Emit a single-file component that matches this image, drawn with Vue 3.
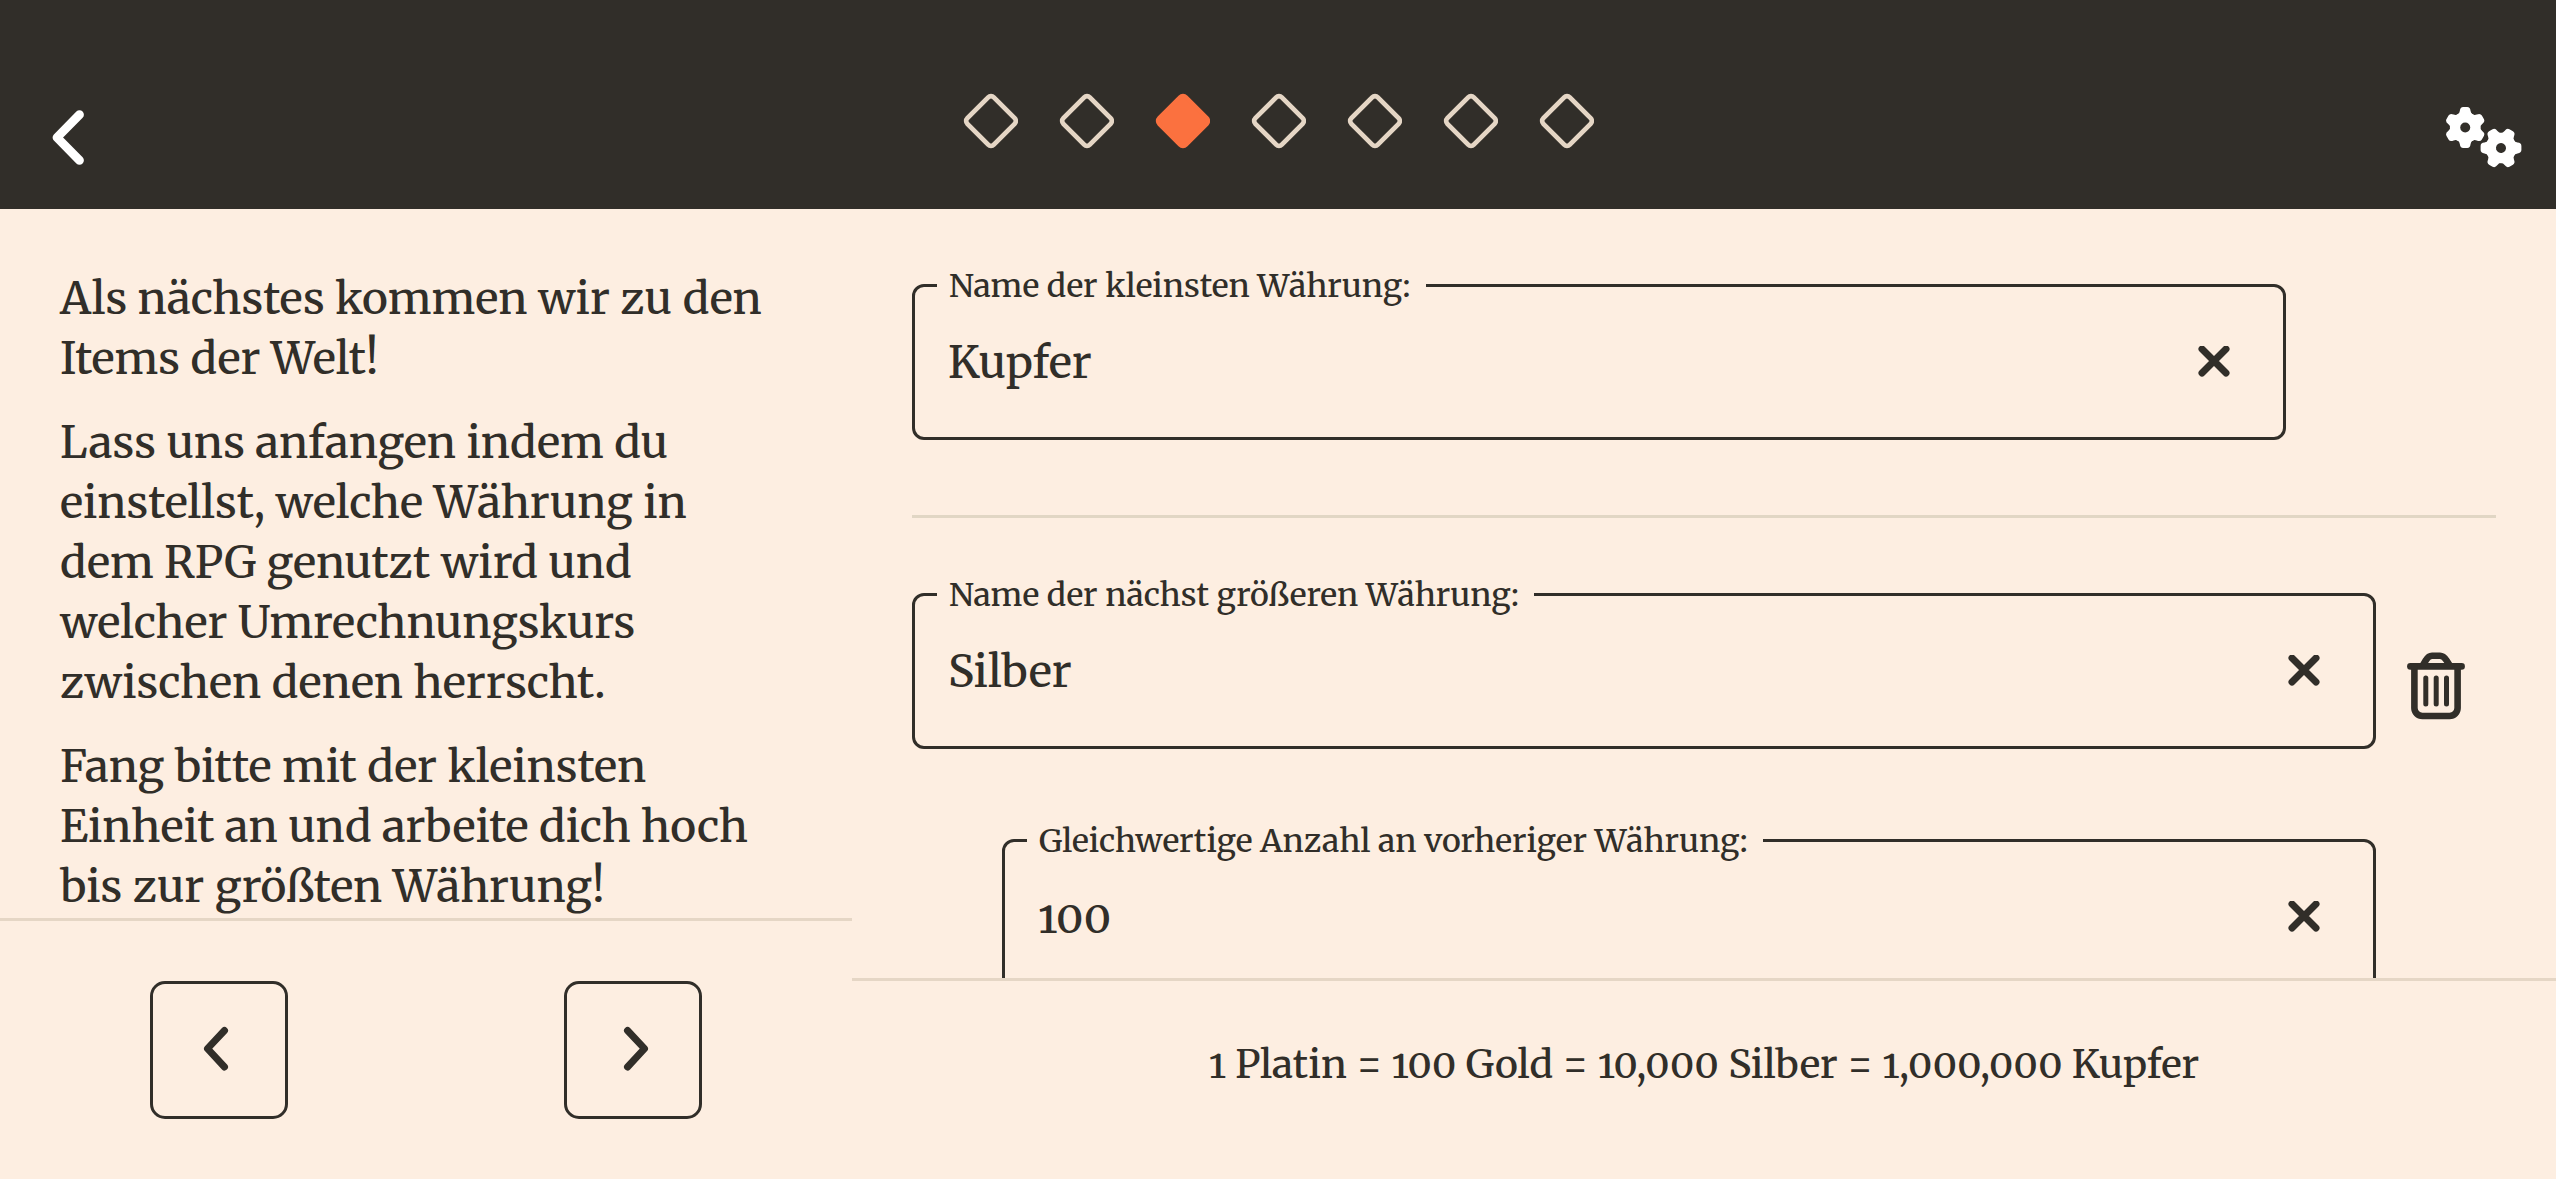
<script setup>
import { ref } from 'vue'

const steps = 7
const currentStep = 3

const smallest = ref('Kupfer')
const next = ref('Silber')
const rate = ref('100')

const teeth = [0, 60, 120, 180, 240, 300]
</script>

<template>
  <div class="app">
    <header class="topbar">
      <button class="back" type="button" aria-label="Zurück">
        <svg width="32" height="56" viewBox="0 0 32 56" aria-hidden="true">
          <path d="M27.5 4.7 L5 27.5 L27.5 50.3" fill="none" stroke="currentColor" stroke-width="8.8" stroke-linecap="round" stroke-linejoin="round" />
        </svg>
      </button>

      <ol class="steps">
        <li v-for="n in steps" :key="n" :class="['step', { active: n === currentStep }]">
          <svg width="56" height="56" viewBox="-29 -28 56 56" aria-hidden="true">
            <rect x="-18.7" y="-18.7" width="37.4" height="37.4" rx="4" transform="rotate(45)" />
          </svg>
        </li>
      </ol>

      <button class="settings" type="button" aria-label="Einstellungen">
        <svg width="76" height="62" viewBox="0 0 76 62" aria-hidden="true">
          <defs>
            <mask id="gear-hole">
              <rect x="-24" y="-24" width="48" height="48" fill="#fff" />
              <circle r="5" fill="#000" />
            </mask>
            <g id="gear" mask="url(#gear-hole)">
              <circle r="15.3" />
              <path
                v-for="angle in teeth"
                :key="angle"
                :transform="`rotate(${angle})`"
                d="M-8 -12.5 Q-5.6 -14 -5.4 -16.5 Q-5 -20.4 -2 -20.4 H2 Q5 -20.4 5.4 -16.5 Q5.6 -14 8 -12.5 Z"
              />
            </g>
          </defs>
          <use href="#gear" transform="translate(19.2 20.5)" />
          <use href="#gear" transform="translate(55 41) rotate(30)" />
        </svg>
      </button>
    </header>

    <main class="content">
      <section class="guide">
        <div class="guide-text">
          <p>Als nächstes kommen wir zu den Items der Welt!</p>
          <p>Lass uns anfangen indem du einstellst, welche Währung in dem RPG genutzt wird und welcher Umrechnungskurs zwischen denen herrscht.</p>
          <p>Fang bitte mit der kleinsten Einheit an und arbeite dich hoch bis zur größten Währung!</p>
        </div>
        <nav class="guide-nav">
          <button class="square" type="button" aria-label="Vorherige Seite">
            <svg width="48" height="48" viewBox="0 0 48 48" aria-hidden="true">
              <path d="M29.5 4.5 L12.5 22.7 L29.5 41" />
            </svg>
          </button>
          <button class="square" type="button" aria-label="Nächste Seite">
            <svg width="48" height="48" viewBox="0 0 48 48" aria-hidden="true">
              <path d="M18.5 4.5 L35.5 22.7 L18.5 41" />
            </svg>
          </button>
        </nav>
      </section>

      <section class="editor">
        <form class="form" @submit.prevent>
          <div class="row first">
            <div class="field">
              <label for="smallest">Name der kleinsten Währung:</label>
              <input id="smallest" v-model="smallest" type="text" />
              <button class="clear" type="button" aria-label="Leeren" @click="smallest = ''">
                <svg width="32" height="32" viewBox="-16 -15 32 32" aria-hidden="true"><path d="M-12 -12 L12 12 M12 -12 L-12 12" /></svg>
              </button>
            </div>
          </div>

          <hr />

          <div class="row currency">
            <div class="field">
              <label for="next">Name der nächst größeren Währung:</label>
              <input id="next" v-model="next" type="text" />
              <button class="clear" type="button" aria-label="Leeren" @click="next = ''">
                <svg width="32" height="32" viewBox="-16 -15 32 32" aria-hidden="true"><path d="M-12 -12 L12 12 M12 -12 L-12 12" /></svg>
              </button>
            </div>
            <button class="trash" type="button" aria-label="Währung löschen">
              <svg width="58" height="68" viewBox="0 0 58 68" fill="none" stroke="currentColor" stroke-linecap="round" stroke-linejoin="round" aria-hidden="true">
                <g stroke-width="6.6">
                  <path d="M3.4 14.4 H54.6" />
                  <path d="M7.4 15 V56 a8 8 0 0 0 8 8 H42.6 a8 8 0 0 0 8 -8 V15" />
                  <path d="M15.8 13.5 L18.7 8.5 Q21.5 3.7 25 3.7 H33 Q36.5 3.7 39.6 8.5 L42.8 13.5" />
                </g>
                <path d="M18.8 26 V52 M29.2 26 V52 M39.5 26 V52" stroke-width="5" />
              </svg>
            </button>
          </div>

          <div class="row rate">
            <div class="field">
              <label for="rate">Gleichwertige Anzahl an vorheriger Währung:</label>
              <input id="rate" v-model="rate" type="text" inputmode="numeric" />
              <button class="clear" type="button" aria-label="Leeren" @click="rate = ''">
                <svg width="32" height="32" viewBox="-16 -15 32 32" aria-hidden="true"><path d="M-12 -12 L12 12 M12 -12 L-12 12" /></svg>
              </button>
            </div>
          </div>
        </form>
        <footer class="summary">1 Platin = 100 Gold = 10,000 Silber = 1,000,000 Kupfer</footer>
      </section>
    </main>
  </div>
</template>

<style>
body {
  margin: 0;
  background: #fdeee1;
}
</style>

<style scoped>
.app {
  --ink: #312e29;
  --paper: #fdeee1;
  --line: #e5d6c5;
  display: flex;
  flex-direction: column;
  height: 100vh;
  box-sizing: border-box;
  background: var(--paper);
  color: var(--ink);
  font-family: Merriweather, "DejaVu Serif Condensed", "DejaVu Serif", serif;
  font-size: 44px;
  font-weight: 500;
  font-variant-numeric: oldstyle-nums;
  line-height: 60px;
}

button {
  display: flex;
  align-items: center;
  justify-content: center;
  padding: 0;
  border: 0;
  background: none;
  color: inherit;
  cursor: pointer;
}

.topbar {
  display: grid;
  grid-template-columns: 1fr auto 1fr;
  align-items: center;
  padding-top: 66px;
  background: var(--ink);
  color: #fff;
}

.back {
  width: 136px;
  height: 143px;
}

.settings {
  justify-self: end;
  width: 144px;
  height: 143px;
  fill: currentColor;
}

.steps {
  display: flex;
  gap: 40px;
  margin: 0 0 33px;
  padding: 0;
  list-style: none;
}

.step {
  display: flex;
}

.step rect {
  fill: none;
  stroke: #e5d6c5;
  stroke-width: 4.8;
}

.step.active rect {
  fill: #fb713f;
  stroke: #fb713f;
}

.content {
  display: grid;
  grid-template-columns: minmax(0, 1fr) minmax(0, 2fr);
  flex: 1;
  min-height: 0;
}

.guide,
.editor {
  display: flex;
  flex-direction: column;
  min-height: 0;
}

.guide-text,
.form {
  flex: 1;
  min-height: 0;
  overflow-y: auto;
  scrollbar-width: none;
}

.guide-text {
  padding: 60px 75px 0 60px;
}

.guide-text p {
  margin: 0 0 24px;
}

.guide-nav {
  display: flex;
  justify-content: space-between;
  padding: 60px 150px;
  border-top: 3px solid var(--line);
}

.square {
  box-sizing: border-box;
  width: 138px;
  height: 138px;
  border: 3px solid var(--ink);
  border-radius: 15px;
}

.square path {
  fill: none;
  stroke: currentColor;
  stroke-width: 7;
  stroke-linecap: round;
  stroke-linejoin: round;
}

.form {
  padding: 60px 60px 0;
}

.form hr {
  height: 3px;
  margin: 60px 0;
  border: 0;
  background: #e1d6c4;
}

.row {
  display: flex;
  align-items: center;
  padding: 15px 0;
}

.first {
  padding-right: 210px;
}

.currency {
  padding-bottom: 45px;
}

.rate {
  margin-top: 30px;
  padding-left: 90px;
  padding-right: 120px;
}

.field {
  position: relative;
  display: flex;
  flex: 1;
  align-items: center;
  box-sizing: border-box;
  height: 156px;
  padding: 0 39px 0 33px;
  border: 3px solid var(--ink);
  border-radius: 12px;
}

.field label {
  position: absolute;
  top: -25px;
  left: 22px;
  padding: 0 15px 0 12px;
  background: var(--paper);
  font-size: 32px;
  line-height: 48px;
  white-space: nowrap;
}

.field input {
  flex: 1;
  min-width: 0;
  height: 100%;
  padding: 0;
  border: 0;
  outline: 0;
  background: none;
  color: inherit;
  font: inherit;
}

.clear {
  width: 60px;
  height: 60px;
}

.clear path {
  fill: none;
  stroke: currentColor;
  stroke-width: 7;
  stroke-linecap: round;
}

.trash {
  width: 120px;
  height: 120px;
  margin-top: 30px;
}

.summary {
  padding: 54px 60px 84px;
  border-top: 3px solid var(--line);
  font-size: 39px;
  text-align: center;
}
</style>
